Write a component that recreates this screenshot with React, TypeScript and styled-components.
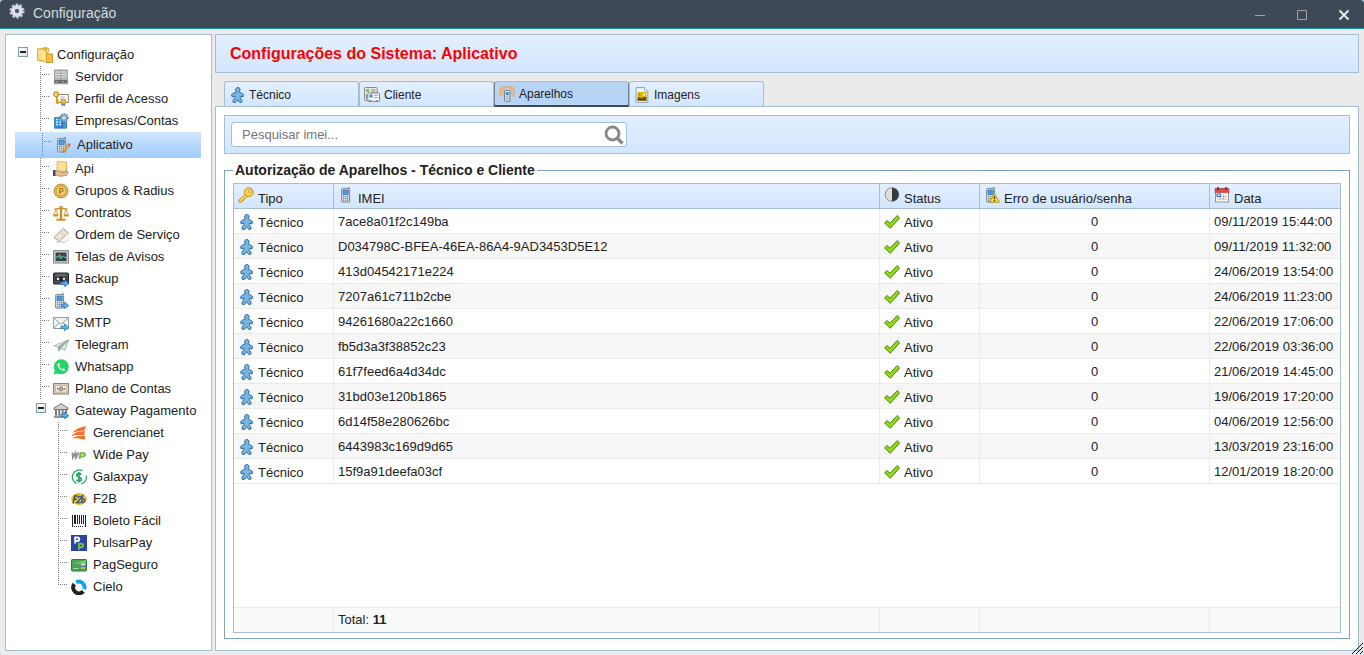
import React from "react";
import styled, { createGlobalStyle, css } from "styled-components";

const c = {
  border: "#a4bed4",
  fieldBorder: "#7ea3c4",
  line: "#ebebeb",
  text: "#222222",
  bar: "#3d4a55",
};
const softBlue = "linear-gradient(#e3efff, #d3e6ff)";

const Global = createGlobalStyle`
  * { box-sizing: border-box; }
  body {
    margin: 0;
    background: #a9c7dd;
    font-family: "Liberation Sans", Arial, sans-serif;
    font-size: 13px;
    line-height: 16px;
    color: ${c.text};
  }
  button, input { font: inherit; color: inherit; }
`;

/* ---------- icons ---------- */

const Svg = styled.svg`
  flex: none;
  width: 16px;
  height: 16px;
  display: block;
`;

const SubArrow = () => (
  <path d="M8 11.2h3.6V9l4.2 3.6-4.2 3.2v-2.2H8z" fill="#5cb4f4" stroke="#1b6cb4" strokeWidth=".7" />
);

const PhoneBody = ({ x = 4 }: { x?: number }) => (
  <g transform={`translate(${x} 0)`}>
    <path d="M-.5 15.500h11l-2-2.500H1.500z" fill="#c4c7c9" />
    <rect x=".6" y="1.400" width="8" height="13.600" rx="1" fill="#dde2e6" stroke="#737d85" strokeWidth=".9" />
    <rect x="7" y="0" width="1.500" height="2" fill="#858d93" />
    <rect x="2" y="3" width="5.200" height="4.600" fill="#4a9be0" stroke="#2767a4" strokeWidth=".6" />
    <path d="M2 9.300h5.300M2 11.300h5.300M2 13.200h5.300" stroke="#66727b" strokeWidth="1" strokeDasharray="1.300 .7" />
  </g>
);

const drawings: Record<string, React.ReactNode> = {
  gear: (
    <>
      <circle cx="8" cy="8" r="6.200" fill="none" stroke="#c0c0d2" strokeWidth="2.800" strokeDasharray="2.400 1.480" />
      <circle cx="8" cy="8" r="4" fill="none" stroke="#dedee8" strokeWidth="4" />
      <circle cx="8" cy="8" r="2" fill="#515c69" />
    </>
  ),
  folders: (
    <>
      <path d="M2.2 2.6 7 .8h3v13H2.2z" fill="#f7c54c" stroke="#c68a1c" strokeWidth=".8" />
      <path d="M9 4.500V1.300h2.800v4" fill="#fbdc82" stroke="#d09a2a" strokeWidth=".7" />
      <path d="m9.500 6.800 6 .2v8.500h-6z" fill="#f6bd3c" stroke="#bf8418" strokeWidth=".8" />
      <path d="M.6 1.800h5.600l3.300 2.400v11.500L5.500 13.600H.6z" fill="#fbdf86" stroke="#d09a2a" strokeWidth=".8" />
      <path d="M3 4.500c2-.5 3.500 1 3.500 3.500v5" fill="none" stroke="#fff3c4" strokeWidth="1.200" />
    </>
  ),
  server: (
    <>
      <path d="M0 15.500h16L14.500 13h-13z" fill="#cfcfcf" />
      <rect x="1.500" y="1" width="6.300" height="13" fill="#b4b6b8" stroke="#8a8c8e" strokeWidth=".8" />
      <rect x="8" y="1" width="6.300" height="13" fill="#b4b6b8" stroke="#8a8c8e" strokeWidth=".8" />
      <path d="M2 3h12M2 5.500h12M2 8h12" stroke="#dcdedf" strokeWidth="1" />
      <path d="M1.500 11h12.800v3.200H1.500z" fill="#6c6e70" />
      <path d="M3 12.700h1.500M9.500 12.700H11" stroke="#8fe36b" />
    </>
  ),
  profile: (
    <>
      <rect x="4" y="3.500" width="11.300" height="8" fill="#fdfdf5" stroke="#887f68" strokeWidth=".9" />
      <path d="M7 6h5M7 8h3" stroke="#b4b4b4" />
      <circle cx="3" cy="3.200" r="2.300" fill="#ffe38a" stroke="#c98913" strokeWidth="1.200" />
      <path d="M3.800 5.500v7.200M3.800 9.500h2M3.800 12h2" stroke="#d59a1e" strokeWidth="1.600" fill="none" />
      <path d="m9 11-.7 4.500 2-1.200 2 1.200L11.800 11z" fill="#3f7fd0" />
      <circle cx="10.400" cy="10.600" r="2.400" fill="#f6bf37" stroke="#b97a10" strokeWidth=".8" />
    </>
  ),
  company: (
    <>
      <path d="M1.500 4.500h6V3h2v12.200h-8z" fill="#2f8fdb" stroke="#1e68a8" strokeWidth=".7" />
      <path d="M3 6.500h2M3 9h2M3 11.500h2M6.200 6.500h2M6.200 9h2M6.200 11.500h2" stroke="#d8efff" strokeWidth="1.400" />
      <path d="M9.500 9h4v6.200h-4z" fill="#3d9be2" stroke="#1e68a8" strokeWidth=".7" />
      <circle cx="11" cy="4.800" r="3.900" fill="none" stroke="#587f9f" strokeWidth="1.600" strokeDasharray="1.500 1" />
      <circle cx="11" cy="4.800" r="2.500" fill="#e3eef8" stroke="#7ea2c2" strokeWidth="1.800" />
    </>
  ),
  phoneEdit: (
    <>
      <PhoneBody x={2} />
      <path d="m13.800 6.600 1.500 1.200-4.700 6.200-2.200 1 .5-2.200z" fill="#f4bd4a" stroke="#a06d1c" strokeWidth=".7" />
      <path d="m13.800 6.600 1.500 1.200-.9 1.200-1.500-1.200z" fill="#d9534f" />
    </>
  ),
  api: (
    <>
      <path d="M4 .8h9.500v10H4z" fill="#fae09a" stroke="#d8a93f" strokeWidth=".8" />
      <path d="M13.500 4v6.800H4" stroke="#eab84e" strokeWidth="1.500" fill="none" />
      <path d="M0 9h2.600v6H0z" fill="#3c4a66" />
      <path d="M2.600 10h4l2.500 1.800 4-1 2.200.3-2 3.400-6 .8-4.700-1.300z" fill="#eebf94" stroke="#a8754a" strokeWidth=".7" />
      <path d="M13.300 8c1.500 2 1.700 3 0 3.200-1.600-.2-1.500-1.200 0-3.200z" fill="#69b5ea" />
    </>
  ),
  coin: (
    <>
      <circle cx="8" cy="8" r="6.900" fill="#e9bd58" stroke="#b07f22" strokeWidth=".9" />
      <circle cx="8" cy="8" r="4.800" fill="#f3d17c" stroke="#c08f30" strokeWidth=".8" />
      <path d="M6.700 11V5.700h1.800a1.500 1.500 0 0 1 0 3.200H6.700" fill="none" stroke="#a67718" strokeWidth="1.200" />
    </>
  ),
  scales: (
    <g fill="none" stroke="#c8922a">
      <path d="M8 1v13" strokeWidth="2.400" />
      <path d="M1.500 4.200C5 4.200 6 3 8 3s3 1.200 6.500 1.200" strokeWidth="1.400" />
      <path d="M2.800 4.500.8 10h4zM13.200 4.500l-2 5.500h4z" strokeWidth=".8" />
      <path d="M.3 10.500h5M10.700 10.500h5" strokeWidth="2" />
      <path d="M3.500 14.800h9" strokeWidth="2" />
    </g>
  ),
  ticket: (
    <>
      <path d="M3 15h9l3-2" stroke="#dddddd" strokeWidth="1.500" fill="none" />
      <path
        d="m.8 10.500 9.700-9.200 1.300 1.200-.1 1.100 1.200.1 2.300 2.300-9.400 8.700-1.300-1.300.1-1.200-1.300.2z"
        fill="#f0e4d8"
        stroke="#ad9a88"
        strokeWidth=".9"
      />
      <path d="m7 4.600 4.800 4.800" stroke="#c2ae9c" strokeDasharray="1 1" />
    </>
  ),
  monitor: (
    <>
      <rect x=".7" y="1.700" width="14.600" height="12.300" fill="#d9d9d9" stroke="#777" />
      <rect x="2.500" y="3.500" width="11" height="8.700" fill="#36434a" />
      <path d="M3 8h2.500l1-2.500 1.200 4.300L9 7.300h1.500l.8 1h2" fill="none" stroke="#6fdcb2" strokeWidth=".9" />
    </>
  ),
  tape: (
    <>
      <rect x=".5" y="2" width="15" height="11" rx=".8" fill="#4a4c50" stroke="#26282b" />
      <path d="M3 4h10" stroke="#7b7e83" />
      <rect x="2.500" y="6" width="11" height="4" fill="#1e2022" />
      <circle cx="5" cy="8" r="1.400" fill="#ddd" />
      <circle cx="11" cy="8" r="1.400" fill="#ddd" />
      <SubArrow />
    </>
  ),
  phoneSend: (
    <>
      <PhoneBody x={2} />
      <SubArrow />
    </>
  ),
  mail: (
    <>
      <rect x=".6" y="2.500" width="14.800" height="11" fill="#f3f6f5" stroke="#8b9791" strokeWidth=".9" />
      <path d="M.8 3 8 9.300 15.200 3M1 13.200l5-5.500M15 13.200l-5-5.500" fill="none" stroke="#8fa099" strokeWidth=".9" />
      <SubArrow />
    </>
  ),
  plane: (
    <>
      <path d="M15.500 3 .8 8.800 5 10.200z" fill="#edf3f2" stroke="#8d9d9b" strokeWidth=".7" />
      <path d="M15.500 3 5 10.200l.8 4 2-2.900z" fill="#9fb3b0" stroke="#82918f" strokeWidth=".6" />
      <path d="M15.500 3 7.500 11.300l4.500 2z" fill="#dfe9e7" stroke="#8d9d9b" strokeWidth=".7" />
    </>
  ),
  whatsapp: (
    <>
      <circle cx="8.200" cy="7.800" r="7.500" fill="#25d366" />
      <path d="M.5 15.600 2 11l3.500 3.300z" fill="#25d366" />
      <path d="M5.700 3.800c-1 .4-1.500 1.300-1.200 2.500.6 2.500 2.800 4.700 5.300 5.400 1.300.3 2.200-.3 2.500-1.500L10.300 9.200l-1 1C8 9.700 6.700 8.400 6.100 7l1-1z" fill="#fff" />
    </>
  ),
  banknote: (
    <>
      <rect x=".6" y="2.600" width="14.800" height="10.400" fill="#e4d8ca" stroke="#88796c" />
      <rect x="2.500" y="4.500" width="11" height="6.600" fill="#f5ecdf" stroke="#b6a797" strokeWidth=".7" />
      <ellipse cx="8" cy="7.800" rx="2.300" ry="2.500" fill="#8f8071" />
      <path d="M4 7.800h1.300M10.700 7.800H12" stroke="#665a4e" strokeWidth="1.500" />
      <path d="M8 6.500v2.600" stroke="#fff" strokeWidth=".8" />
    </>
  ),
  bank: (
    <>
      <path d="M8 .7 1 5v1.500h14V5z" fill="#d2d2d2" stroke="#6a6a6a" strokeWidth=".9" />
      <path d="M3 7v5.500M6.300 7v5.500M9.700 7v5.500M13 7v5.500" stroke="#777" strokeWidth="1.900" />
      <path d="M1.500 13h13v1.500h-13z" fill="#aaa" stroke="#696969" strokeWidth=".6" />
      <SubArrow />
    </>
  ),
  gerencianet: (
    <g fill="#f4702a">
      <path d="M15 1.200C9 2 4 4.300 1.300 7.800c4.500-1.600 8-2.100 12-2.100z" />
      <path d="M13.800 6C8 6.200 3 7.800.2 11c4-1 8.500-1.200 13-.6z" />
      <path d="M14.200 10.900C9 10.200 4.500 10.900.8 13.200c4.500-.2 9 .1 13.200 1.600z" />
    </g>
  ),
  widepay: (
    <g fill="none">
      <path d="m1.500 5.500.5 5 2.500-4.500.5 4.500L7.500 5.500" stroke="#8f8f8f" strokeWidth="1.900" />
      <path d="M8.500 11.800 9.600 6.300h3c2.200 0 1.800 3.200-1 3.200H9.500" stroke="#77b843" strokeWidth="2.100" />
    </g>
  ),
  galaxpay: (
    <g fill="none" stroke="#27a567">
      <path d="M11.500 1.600A7 7 0 1 0 5.500 14.600M15.200 6.500A7 7 0 0 1 10 15" strokeWidth="1.200" />
      <path d="M10.500 5.500C9.500 4.300 5.700 4.200 5.700 6.300S10.500 8 10.500 10.200 6.500 12.300 5.300 10.800M8 3v10.500" strokeWidth="1.700" />
    </g>
  ),
  f2b: (
    <>
      <ellipse cx="8" cy="8" rx="7.800" ry="6" fill="#eebc1c" />
      <path
        d="M2 12.500 3.700 5h3M2.700 8.300h3M7 6.800c.5-2 3.700-1.700 2.900.3L6 11.600h3.600M11.700 3.500l-1 7.800c3.500 1.200 4.800-4 .6-3.400"
        fill="none"
        stroke="#36558a"
        strokeWidth="1.400"
      />
    </>
  ),
  barcode: (
    <g shapeRendering="crispEdges" fill="#222">
      <path d="M1 2h1v12H1zM3 2h2v9H3zM6 2h1v9H6zM8 2h1v9H8zM10 2h1v9h-1zM12 2h1v9h-1zM14 2h1v12h-1z" />
      <path d="M3 13h1v1H3zM5 13h1v1H5zM7 13h1v1H7zM9 13h1v1H9zM11 13h1v1h-1z" />
    </g>
  ),
  pulsar: (
    <>
      <rect width="16" height="16" fill="#2b45a3" />
      <path d="M4.200 8.500V2.500h2.300a1.700 1.700 0 0 1 0 3.500H4.200" fill="none" stroke="#fff" strokeWidth="1.900" />
      <path d="M8 14.800V8.700h2.300a1.700 1.700 0 0 1 0 3.500H8" fill="none" stroke="#7ac143" strokeWidth="1.900" />
    </>
  ),
  card: (
    <>
      <rect x=".5" y="2.500" width="15" height="11.500" rx=".8" fill="#4ba353" stroke="#2f7d3b" />
      <path d="M1 6.500C6 5.500 10 4.500 15 3v3.500z" fill="#7cc480" />
      <path d="M2.500 11.500h5" stroke="#c9edc9" strokeDasharray="2 .7" />
      <path d="M10 7.500h4" stroke="#e9eef9" strokeWidth="1.600" />
      <path d="M10 9.500h4" stroke="#4c6fc4" />
      <path d="M10 11h4" stroke="#f4b94a" strokeWidth="1.500" />
    </>
  ),
  cielo: (
    <g fill="none" strokeWidth="4">
      <path d="M5.200 3.200a5.800 5.800 0 0 1 8 7" stroke="#12a5ee" />
      <path d="M3.300 5A5.800 5.800 0 0 0 12.300 12.300" stroke="#222" />
    </g>
  ),
  person: (
    <path
      d="M8.800.5c1.600 0 2.400 1.100 2.200 2.500-.1.900-.4 1.400-.9 1.900l1.500.6 2.900 2-.5 2.500-2.500-.8-.3 1.600 2 3-.6 1.500-1.900.1-2.200-2.800-2 2.900-2.400-.3-.2-1.500 1.900-3V9l-2.500 1-.8-2.300 2.800-2.100 2.200-.7c-.6-.5-.9-1.200-.9-2C6.600 1.500 7.500.5 8.800.5z"
      fill="#76b5e3"
      stroke="#2f6c9f"
      strokeWidth="1"
      strokeLinejoin="round"
    />
  ),
  client: (
    <>
      <rect x=".6" y=".6" width="12.500" height="13" rx=".7" fill="#f1f4e9" stroke="#7a8583" />
      <rect x="2.300" y="2.200" width="3" height="3" fill="#84b63c" />
      <path d="M7 3h4.500M7 5h4.500M2.500 7v5" stroke="#76807d" />
      <rect x="3.800" y="6" width="11.700" height="8.300" rx=".7" fill="#f8fafb" stroke="#7a8583" />
      <circle cx="7" cy="9" r="1.800" fill="#3598de" />
      <path d="M10 8.300h4M10 10.500h4" stroke="#9aa5ad" />
      <path d="m5 15 1-2 1.500 2M12 15l1-2 1.500 2" stroke="#76807d" fill="none" />
    </>
  ),
  signal: (
    <>
      <g fill="none" stroke="#f0ab69" strokeWidth="1.700">
        <path d="M2.600 10.500a7 7 0 1 1 10.800 0" />
        <path d="M4.500 8.500a4.500 4.500 0 1 1 7 0" />
      </g>
      <path d="M3.500 15.500h9l-1.500-2H5z" fill="#b2bac3" />
      <rect x="5.500" y="4.500" width="5.400" height="10.800" rx=".8" fill="#e1e6eb" stroke="#6c7881" strokeWidth=".9" />
      <rect x="6.700" y="6" width="3" height="3.200" fill="#3e94df" />
      <path d="M6.700 11h3M6.700 13h3" stroke="#66727b" strokeDasharray="1 .7" />
    </>
  ),
  image: (
    <>
      <path d="M2 .6h8.500l3.300 3.300v11.500H2z" fill="#e9f4fc" stroke="#7c9ab3" strokeWidth=".9" />
      <path d="M10.500.6v3.300h3.300" fill="#fff" stroke="#7c9ab3" strokeWidth=".7" />
      <rect x="3.500" y="5" width="9" height="8.700" fill="#e0b70c" />
      <path d="M3.500 10.500h3l1.500.8 2-1.500 2.500.5v3.400h-9z" fill="#6b5209" />
      <path d="M4 6.500c2 0 2.500 2 1 3" fill="none" stroke="#a57e07" />
      <path d="M9.200 6.500h2v2h-2z" fill="#fff3a0" />
    </>
  ),
  key: (
    <>
      <path d="m7.300 7.200-6.400 6v2h2.800l.4-1.500 1.700-.3.300-1.700 1.600-.3 2-2z" fill="#fbd45c" stroke="#c78b16" strokeWidth=".9" />
      <circle cx="10.800" cy="5.200" r="4.500" fill="#fad052" stroke="#c78b16" strokeWidth=".9" />
      <circle cx="12" cy="4" r="1.400" fill="#fff" stroke="#c78b16" strokeWidth=".8" />
    </>
  ),
  phone: <PhoneBody x={3} />,
  phoneWarn: (
    <>
      <PhoneBody x={2} />
      <path d="m10.500 6.500 5 8.700h-10z" fill="#f8dc36" stroke="#ad8f0a" strokeWidth=".8" />
      <path d="M10.500 9.300v3M10.500 13v1.200" stroke="#3f3500" strokeWidth="1.300" />
    </>
  ),
  contrast: (
    <>
      <circle cx="8" cy="7.500" r="6.800" fill="#dedede" stroke="#777" strokeWidth=".8" />
      <path d="M8 .7a6.800 6.800 0 0 1 0 13.600z" fill="#37393c" />
    </>
  ),
  calendar: (
    <>
      <rect x="1.500" y="1.500" width="13" height="13.500" fill="#f7f7f7" stroke="#8a8a8a" strokeWidth=".9" />
      <path d="M1 1.500h14v4.200H1z" fill="#dc4b4b" stroke="#b13232" strokeWidth=".5" />
      <path d="M4 0v3M12 0v3" stroke="#66393a" strokeWidth="1.700" />
      <path d="M3 9.500h10M3 12h10M6 7.500v6M9.500 7.500v6" stroke="#a9aeb0" strokeWidth=".8" />
      <rect x="3" y="7" width="3.500" height="2.400" fill="#fff" stroke="#2555a8" strokeWidth=".9" />
    </>
  ),
  check: (
    <path
      d="M.6 8.900 3 6.500l3 2.700 7.200-7.700 2.400 2.400L6.300 14.300z"
      fill="#93d816"
      stroke="#478a0b"
      strokeWidth="1"
      strokeLinejoin="round"
    />
  ),
};

const Icon = ({ name }: { name: string }) => (
  <Svg viewBox="0 0 16 16" aria-hidden="true">
    {drawings[name]}
  </Svg>
);

/* ---------- window frame ---------- */

const Window = styled.div`
  position: relative;
  display: flex;
  flex-direction: column;
  min-height: 100vh;
  background: #ebebeb;
  border-radius: 4px 4px 2px 2px;
  overflow: hidden;
`;

const TitleBar = styled.header`
  display: flex;
  align-items: center;
  gap: 8px;
  height: 29px;
  padding: 0 14px 2px 9px;
  background: ${c.bar};
  border-bottom: 1px solid #1a93ad;
  color: #d3dade;
  font-size: 14px;
`;

const WindowTitle = styled.span`
  flex: 1;
`;

const TitleIcon = styled.span`
  padding-bottom: 4px;
`;

const WindowButtons = styled.div`
  display: flex;
  gap: 30px;
  padding-top: 4px;
`;

const WindowButton = styled.button<{ $bright?: boolean }>`
  display: block;
  width: 12px;
  height: 12px;
  padding: 0;
  border: 0;
  background: none;
  color: ${(p) => (p.$bright ? "#e8e8e8" : "#a0a0a0")};
`;

const Glyph = styled.svg`
  display: block;
  width: 12px;
  height: 12px;
  fill: none;
  stroke: currentColor;
`;

const Grip = styled.svg`
  position: absolute;
  right: 1px;
  bottom: 1px;
  width: 12px;
  height: 12px;
  stroke: #111;
`;

const Body = styled.div`
  display: flex;
  flex: 1;
  gap: 3px;
  padding: 5px 5px 4px;
`;

/* ---------- tree ---------- */

const TreePanel = styled.nav`
  flex: none;
  width: 207px;
  padding: 9px 10px 8px 9px;
  background: #fff;
  border: 1px solid ${c.border};
`;

const TreeList = styled.ul`
  margin: 0;
  padding: 0;
  list-style: none;
`;

const TreeRow = styled.div<{ $depth: number; $selected?: boolean }>`
  display: flex;
  align-items: center;
  height: 22px;
  padding-left: ${(p) => [3, 25, 43][p.$depth]}px;
  ${(p) =>
    p.$selected &&
    css`
      height: 26px;
      padding: 1px 2px 1px 27px;
      background: linear-gradient(#d0e5ff, #a0ccff);
    `}
`;

const dots = (to: string) => `repeating-linear-gradient(to ${to}, #808080 0 1px, transparent 1px 2px)`;

const Guide = styled.span<{ $last?: boolean }>`
  flex: none;
  align-self: stretch;
  width: 13px;
  background:
    ${dots("bottom")} 0 0 / 1px ${(p) => (p.$last ? "9px" : "100%")} no-repeat,
    ${dots("right")} 0 8px / 10px 1px no-repeat;
`;

const Toggle = styled.button<{ $root?: boolean }>`
  flex: none;
  width: 10px;
  height: 10px;
  margin: 0 ${(p) => (p.$root ? 9 : 7)}px 6px ${(p) => (p.$root ? 0 : -4)}px;
  padding: 0;
  display: grid;
  place-items: center;
  background: linear-gradient(135deg, #fff, #d9dee3);
  border: 1px solid #7c9ab5;

  &::before {
    content: "";
    width: 6px;
    height: 2px;
    background: #222;
  }
`;

const NodeLink = styled.a<{ $root?: boolean }>`
  display: flex;
  align-items: center;
  gap: ${(p) => (p.$root ? 4 : 6)}px;
  color: inherit;
  text-decoration: none;
  white-space: nowrap;

  span {
    padding-bottom: 1px;
  }
`;

type Leaf = { label: string; icon: string; selected?: boolean };

const mainNodes: Leaf[] = [
  { label: "Servidor", icon: "server" },
  { label: "Perfil de Acesso", icon: "profile" },
  { label: "Empresas/Contas", icon: "company" },
  { label: "Aplicativo", icon: "phoneEdit", selected: true },
  { label: "Api", icon: "api" },
  { label: "Grupos & Radius", icon: "coin" },
  { label: "Contratos", icon: "scales" },
  { label: "Ordem de Serviço", icon: "ticket" },
  { label: "Telas de Avisos", icon: "monitor" },
  { label: "Backup", icon: "tape" },
  { label: "SMS", icon: "phoneSend" },
  { label: "SMTP", icon: "mail" },
  { label: "Telegram", icon: "plane" },
  { label: "Whatsapp", icon: "whatsapp" },
  { label: "Plano de Contas", icon: "banknote" },
];

const gatewayNodes: Leaf[] = [
  { label: "Gerencianet", icon: "gerencianet" },
  { label: "Wide Pay", icon: "widepay" },
  { label: "Galaxpay", icon: "galaxpay" },
  { label: "F2B", icon: "f2b" },
  { label: "Boleto Fácil", icon: "barcode" },
  { label: "PulsarPay", icon: "pulsar" },
  { label: "PagSeguro", icon: "card" },
  { label: "Cielo", icon: "cielo" },
];

const Node = ({ label, icon, root }: { label: string; icon: string; root?: boolean }) => (
  <NodeLink href="#" $root={root}>
    <Icon name={icon} />
    <span>{label}</span>
  </NodeLink>
);

const Leaves = ({ items, depth }: { items: Leaf[]; depth: number }) => (
  <>
    {items.map((n, i) => (
      <li key={n.label}>
        <TreeRow $depth={depth} $selected={n.selected}>
          <Guide $last={depth === 2 && i === items.length - 1} />
          <Node label={n.label} icon={n.icon} />
        </TreeRow>
      </li>
    ))}
  </>
);

const Tree = () => (
  <TreePanel aria-label="Configuração">
    <TreeList>
      <li>
        <TreeRow $depth={0}>
          <Toggle $root aria-label="Recolher Configuração" />
          <Node label="Configuração" icon="folders" root />
        </TreeRow>
        <TreeList>
          <Leaves items={mainNodes} depth={1} />
          <li>
            <TreeRow $depth={1}>
              <Toggle aria-label="Recolher Gateway Pagamento" />
              <Node label="Gateway Pagamento" icon="bank" />
            </TreeRow>
            <TreeList>
              <Leaves items={gatewayNodes} depth={2} />
            </TreeList>
          </li>
        </TreeList>
      </li>
    </TreeList>
  </TreePanel>
);

/* ---------- main area ---------- */

const Main = styled.main`
  display: flex;
  flex-direction: column;
  flex: 1;
  min-width: 0;
`;

const Heading = styled.h1`
  margin: 0 0 8px;
  padding: 9px 14px;
  background: ${softBlue};
  border: 1px solid ${c.border};
  color: #ff0000;
  font-size: 16px;
  line-height: 19px;
`;

const Tabs = styled.div`
  display: flex;
  padding-left: 9px;
`;

const Tab = styled.button<{ $active?: boolean }>`
  display: flex;
  align-items: center;
  gap: 4px;
  width: 135px;
  height: 25px;
  padding: 1px 4px 0;
  background: ${softBlue};
  border: 1px solid ${c.border};
  border-bottom: 0;
  border-radius: 3px 3px 0 0;
  font-size: 12px;
  ${(p) =>
    p.$active &&
    css`
      height: 26px;
      margin-bottom: -1px;
      padding-top: 0;
      z-index: 1;
      background: #b8d4f5;
      border-left: 1px dotted #333;
      border-right: 1px dotted #333;
      border-bottom: 2px solid ${c.bar};
    `}
`;

const TabPage = styled.section`
  display: flex;
  flex-direction: column;
  flex: 1;
  gap: 8px;
  padding: 8px 8px 11px;
  background: #fff;
  border: 1px solid ${c.border};
`;

const Toolbar = styled.div`
  padding: 6px;
  background: ${softBlue};
  border: 1px solid ${c.border};
`;

const SearchBox = styled.div`
  display: flex;
  align-items: center;
  width: 396px;
  height: 25px;
  padding: 0 2px 0 10px;
  background: #fff;
  border: 1px solid ${c.border};
  border-radius: 3px;
`;

const SearchInput = styled.input`
  flex: 1;
  min-width: 0;
  padding: 0;
  border: 0;
  outline: 0;
  background: none;

  &::placeholder {
    color: #757575;
    opacity: 1;
  }
`;

const SearchButton = styled.button`
  display: block;
  width: 20px;
  height: 20px;
  padding: 0;
  border: 0;
  background: none;
`;

const Magnifier = styled.svg`
  display: block;
  width: 20px;
  height: 20px;
  fill: none;
  stroke: #888;
`;

const Group = styled.fieldset`
  display: flex;
  flex-direction: column;
  flex: 1;
  min-width: 0;
  margin: 0;
  padding: 5px 8px;
  border: 1px solid ${c.fieldBorder};
`;

const Legend = styled.legend`
  padding: 0 2px;
  font-size: 14px;
  font-weight: bold;
`;

const GridBox = styled.div`
  display: flex;
  flex-direction: column;
  flex: 1;
  justify-content: space-between;
  border: 1px solid ${c.border};
`;

const Table = styled.table`
  width: 100%;
  table-layout: fixed;
  border-collapse: separate;
  border-spacing: 0;
`;

const HeadCell = styled.th`
  height: 25px;
  padding: 2px 4px 0;
  background: ${softBlue};
  border-right: 1px solid ${c.border};
  border-bottom: 1px solid ${c.border};
  font-weight: normal;
  text-align: left;

  &:last-child {
    border-right: 0;
  }
`;

const HeadLabel = styled.span`
  display: flex;
  gap: 4px;
  height: 20px;

  span {
    align-self: flex-end;
  }
`;

const Row = styled.tr`
  &:nth-child(even) {
    background: #f7f7f7;
  }
`;

const Cell = styled.td<{ $center?: boolean }>`
  height: 25px;
  padding: 2px 4px 0;
  border-right: 1px solid ${c.line};
  border-bottom: 1px solid ${c.line};
  text-align: ${(p) => (p.$center ? "center" : "left")};
  white-space: nowrap;

  &:last-child {
    border-right: 0;
  }
`;

const IconLabel = styled.span`
  display: flex;
  align-items: flex-start;
  gap: 4px;
  padding-top: 1px;

  span {
    padding-top: 1px;
  }
`;

const FootCell = styled(Cell)`
  padding-top: 0;
  background: #fafafa;
  border-top: 1px solid ${c.line};
  border-bottom: 0;
`;

const Columns = () => (
  <colgroup>
    <col width="100" />
    <col />
    <col width="100" />
    <col width="230" />
    <col width="130" />
  </colgroup>
);

const columns = [
  ["Tipo", "key"],
  ["IMEI", "phone"],
  ["Status", "contrast"],
  ["Erro de usuário/senha", "phoneWarn"],
  ["Data", "calendar"],
];

const devices = [
  ["7ace8a01f2c149ba", "09/11/2019 15:44:00"],
  ["D034798C-BFEA-46EA-86A4-9AD3453D5E12", "09/11/2019 11:32:00"],
  ["413d04542171e224", "24/06/2019 13:54:00"],
  ["7207a61c711b2cbe", "24/06/2019 11:23:00"],
  ["94261680a22c1660", "22/06/2019 17:06:00"],
  ["fb5d3a3f38852c23", "22/06/2019 03:36:00"],
  ["61f7feed6a4d34dc", "21/06/2019 14:45:00"],
  ["31bd03e120b1865", "19/06/2019 17:20:00"],
  ["6d14f58e280626bc", "04/06/2019 12:56:00"],
  ["6443983c169d9d65", "13/03/2019 23:16:00"],
  ["15f9a91deefa03cf", "12/01/2019 18:20:00"],
];

const tabs = [
  ["Técnico", "person"],
  ["Cliente", "client"],
  ["Aparelhos", "signal"],
  ["Imagens", "image"],
];

const DeviceGrid = () => (
  <GridBox>
    <Table>
      <Columns />
      <thead>
        <tr>
          {columns.map(([label, icon]) => (
            <HeadCell key={label} scope="col">
              <HeadLabel>
                <Icon name={icon} />
                <span>{label}</span>
              </HeadLabel>
            </HeadCell>
          ))}
        </tr>
      </thead>
      <tbody>
        {devices.map(([imei, date]) => (
          <Row key={imei}>
            <Cell>
              <IconLabel>
                <Icon name="person" />
                <span>Técnico</span>
              </IconLabel>
            </Cell>
            <Cell>{imei}</Cell>
            <Cell>
              <IconLabel>
                <Icon name="check" />
                <span>Ativo</span>
              </IconLabel>
            </Cell>
            <Cell $center>0</Cell>
            <Cell>{date}</Cell>
          </Row>
        ))}
      </tbody>
    </Table>
    <Table>
      <Columns />
      <tbody>
        <tr>
          <FootCell />
          <FootCell>
            Total: <b>{devices.length}</b>
          </FootCell>
          <FootCell />
          <FootCell />
          <FootCell />
        </tr>
      </tbody>
    </Table>
  </GridBox>
);

export default function App() {
  return (
    <>
      <Global />
      <Window>
        <TitleBar>
          <TitleIcon>
            <Icon name="gear" />
          </TitleIcon>
          <WindowTitle>Configuração</WindowTitle>
          <WindowButtons>
            <WindowButton aria-label="Minimizar">
              <Glyph viewBox="0 0 12 12">
                <path d="M1 6.500h10" />
              </Glyph>
            </WindowButton>
            <WindowButton aria-label="Maximizar">
              <Glyph viewBox="0 0 12 12">
                <path d="M1.500 1.500h9v9h-9z" />
              </Glyph>
            </WindowButton>
            <WindowButton aria-label="Fechar" $bright>
              <Glyph viewBox="0 0 12 12">
                <path d="m1.500 1.500 9 9M10.500 1.500l-9 9" strokeWidth="2" />
              </Glyph>
            </WindowButton>
          </WindowButtons>
        </TitleBar>
        <Body>
          <Tree />
          <Main>
            <Heading>Configurações do Sistema: Aplicativo</Heading>
            <Tabs role="tablist">
              {tabs.map(([label, icon]) => (
                <Tab key={label} role="tab" aria-selected={label === "Aparelhos"} $active={label === "Aparelhos"}>
                  <Icon name={icon} />
                  {label}
                </Tab>
              ))}
            </Tabs>
            <TabPage role="tabpanel" aria-label="Aparelhos">
              <Toolbar>
                <SearchBox>
                  <SearchInput type="text" aria-label="Pesquisar imei" placeholder="Pesquisar imei..." />
                  <SearchButton aria-label="Pesquisar">
                    <Magnifier viewBox="0 0 20 20">
                      <circle cx="8.500" cy="8.500" r="6.500" strokeWidth="2.800" />
                      <path d="m13.500 13.500 5 5" strokeWidth="3.300" />
                    </Magnifier>
                  </SearchButton>
                </SearchBox>
              </Toolbar>
              <Group>
                <Legend>Autorização de Aparelhos - Técnico e Cliente</Legend>
                <DeviceGrid />
              </Group>
            </TabPage>
          </Main>
        </Body>
        <Grip viewBox="0 0 12 12" aria-hidden="true">
          <path d="M1 12 12 1M5 12l7-7M9 12l3-3" />
        </Grip>
      </Window>
    </>
  );
}
